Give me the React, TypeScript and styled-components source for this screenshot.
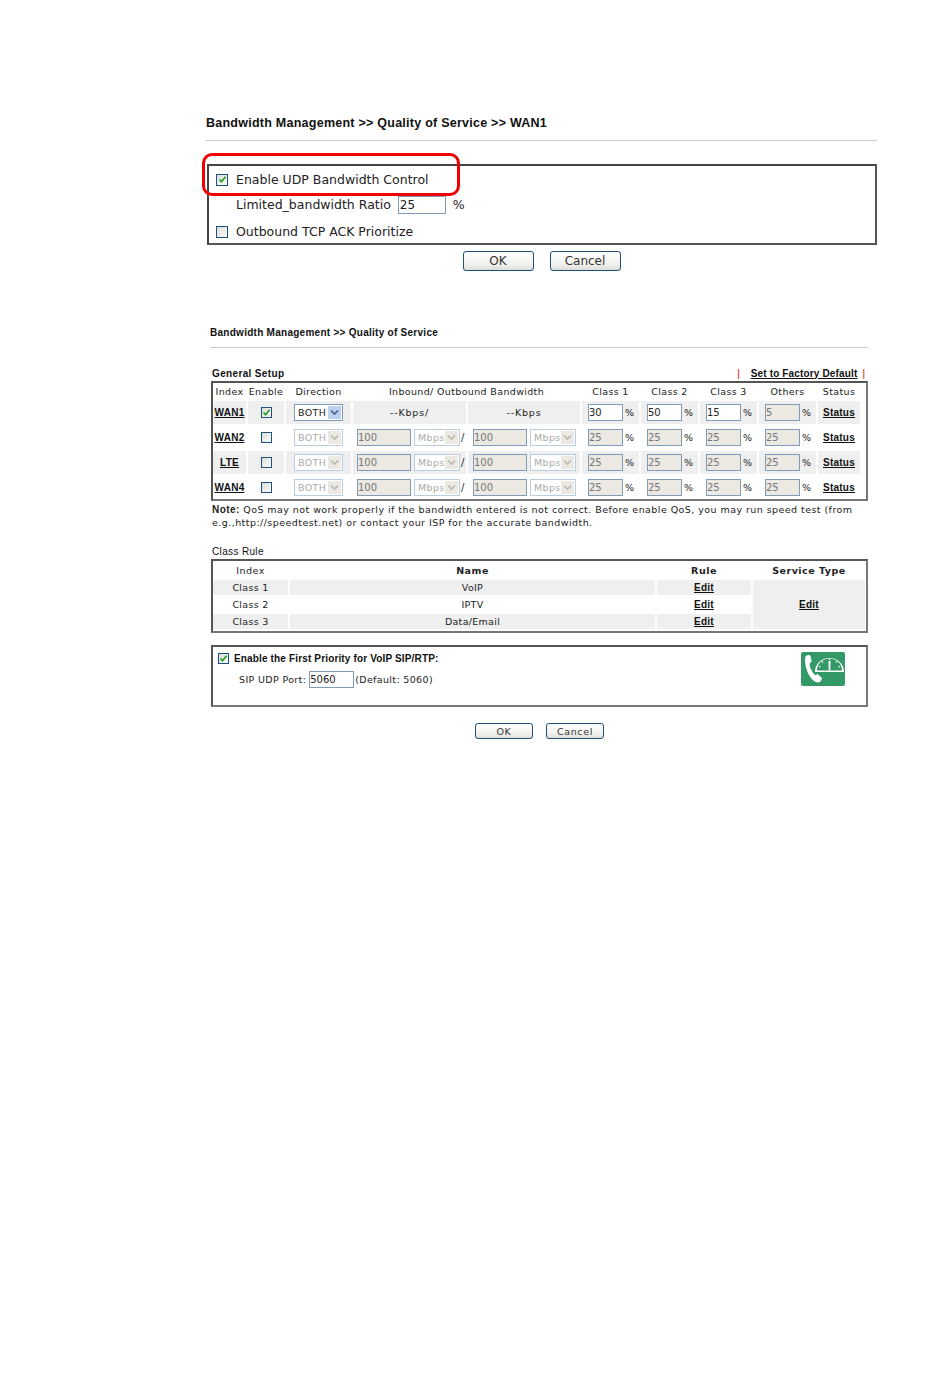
import React from "react";
import styled, { createGlobalStyle } from "styled-components";

const GlobalStyle = createGlobalStyle`
  html, body { margin: 0; padding: 0; background: #fff; }
  body { font-family: "DejaVu Sans", Verdana, sans-serif; color: #111; }
`;

const Page = styled.div`
  width: 950px;
  height: 1388px;
  padding-top: 114px;
  box-sizing: border-box;
  overflow: hidden;
`;

const Upper = styled.section`
  position: relative;
  width: 671px;
  margin-left: 206px;
`;

const Lower = styled.section`
  width: 658px;
  margin: 55px 0 0 210px;
`;

const PageTitle = styled.h1<{ $small?: boolean }>`
  margin: 0;
  font: bold ${(p) => (p.$small ? "10px/14px" : "12.5px/18px")} "Liberation Sans", Arial, sans-serif;
  letter-spacing: ${(p) => (p.$small ? "0.27px" : "0.25px")};
  padding-bottom: ${(p) => (p.$small ? "7px" : "8px")};
  border-bottom: 1px solid #ccc;
`;

const Frame = styled.div`
  box-sizing: border-box;
  border: 2px solid #555;
  border-right-color: #777;
  border-bottom-color: #777;
`;

const UdpFrame = styled(Frame)`
  height: 81px;
  margin-top: 23px;
  margin-left: 1px;
  padding: 1px 0 0 7px;
  display: flex;
  flex-direction: column;
  border-color: #444;
  border-right-color: #555;
  border-bottom-color: #555;
  font-size: 12.5px;
  color: #222;
`;

const UdpRow = styled.div<{ $indent?: boolean; $drop?: number }>`
  flex: none;
  height: ${(p) => (p.$drop ? "23px" : "25px")};
  margin-top: ${(p) => p.$drop ?? 0}px;
  display: flex;
  align-items: center;
  gap: ${(p) => (p.$indent ? "7px" : "8px")};
  padding-left: ${(p) => (p.$indent ? "20px" : "0")};
`;

const Highlight = styled.div`
  position: absolute;
  left: -4px;
  top: 39px;
  width: 258px;
  height: 43px;
  box-sizing: border-box;
  border: 3px solid #f00000;
  border-radius: 10px;
  pointer-events: none;
`;

const RatioInput = styled.input`
  box-sizing: border-box;
  width: 48px;
  height: 18px;
  padding: 0 1px;
  border: 1px solid #7f9db9;
  font: 12px "DejaVu Sans", sans-serif;
  color: #222;
  outline: none;
`;

const ButtonRow = styled.div<{ $small?: boolean }>`
  display: flex;
  gap: ${(p) => (p.$small ? "13px" : "16px")};
  justify-content: center;
  margin-top: ${(p) => (p.$small ? "16px" : "6px")};
  padding-left: ${(p) => (p.$small ? "1px" : "0")};
`;

const Btn = styled.button<{ $small?: boolean }>`
  box-sizing: border-box;
  width: ${(p) => (p.$small ? "58px" : "71px")};
  height: ${(p) => (p.$small ? "16px" : "20px")};
  padding: 0;
  border: 1px solid #1e5078;
  border-radius: 3px;
  background: linear-gradient(#ffffff, #f0f0ec 70%, #dcdcd8);
  font: ${(p) => (p.$small ? "9.5px" : "12px")} "DejaVu Sans", sans-serif;
  letter-spacing: ${(p) => (p.$small ? "0.6px" : "0")};
  color: #333;
`;

const Box = styled.span<{ $small?: boolean }>`
  box-sizing: border-box;
  flex: none;
  display: inline-flex;
  align-items: center;
  justify-content: center;
  width: ${(p) => (p.$small ? "11px" : "12px")};
  height: ${(p) => (p.$small ? "11px" : "12px")};
  border: 1px solid #1c5180;
  background: linear-gradient(135deg, #dcdcd7, #fbfbf9);
`;

const Check = ({ on, small }: { on?: boolean; small?: boolean }) => (
  <Box $small={small}>
    {on && (
      <svg width="9" height="9" viewBox="0 0 9 9">
        <path d="M1.5 4.5 L3.5 6.8 L7.6 1.8" fill="none" stroke="#21a121" strokeWidth="1.7" />
      </svg>
    )}
  </Box>
);

const BarRow = styled.div`
  display: flex;
  justify-content: space-between;
  align-items: center;
  height: 15px;
  margin-top: 18px;
  padding: 0 2px;
`;

const SubTitle = styled.span<{ $light?: boolean }>`
  font: ${(p) => (p.$light ? "normal" : "bold")} 10px/14px "Liberation Sans", Arial, sans-serif;
  letter-spacing: 0.35px;
`;

const FactoryLinks = styled.span`
  display: flex;
  gap: 11px;
  margin-right: 1px;
  color: #e00000;
  font: 10px/14px "Liberation Sans", Arial, sans-serif;
  align-items: center;
`;

const BoldLink = styled.a`
  font: bold 10px/14px "Liberation Sans", Arial, sans-serif;
  letter-spacing: 0.25px;
  color: #111;
  text-decoration: underline;
`;

const FactoryLink = styled(BoldLink)`
  margin-right: -6px;
  letter-spacing: 0.15px;
`;

const SetupGrid = styled(Frame)`
  height: 120px;
  margin: 0 0 0 1px;
  display: grid;
  grid-template-columns: 33px 36px 65px 113px 112px 57px 57px 57px 57px 42px;
  grid-template-rows: 16px repeat(4, 23px);
  gap: 2px;
  align-content: start;
`;

const Head = styled.div<{ $span?: number }>`
  grid-column: span ${(p) => p.$span ?? 1};
  display: flex;
  align-items: center;
  justify-content: center;
  font-size: 9.5px;
  letter-spacing: 0.35px;
  color: #222;
  white-space: nowrap;
`;

const Cell = styled.div<{ $shade?: boolean; $pad?: number }>`
  display: flex;
  align-items: center;
  justify-content: ${(p) => (p.$pad ? "flex-start" : "center")};
  padding-left: ${(p) => p.$pad ?? 0}px;
  background: ${(p) => (p.$shade ? "#efefef" : "transparent")};
  font-size: 9.5px;
  letter-spacing: 0.3px;
  color: #222;
  white-space: nowrap;
  min-width: 0;
`;

const KbpsCell = styled(Cell)`
  letter-spacing: 0.8px;
`;

const PercentCell = styled(Cell)`
  justify-content: flex-start;
  padding-left: 6px;
  gap: 2px;
`;

const Field = styled.input<{ $w: number }>`
  box-sizing: border-box;
  flex: none;
  width: ${(p) => p.$w}px;
  height: 17px;
  padding: 0;
  border: 1px solid #7f9db9;
  background: #fff;
  font: 10px "DejaVu Sans", sans-serif;
  color: #222;
  outline: none;
  &:disabled {
    background: #ebe9e2;
    color: #777;
    opacity: 1;
  }
`;

const SelectBox = styled.span<{ $w: number; $off?: boolean }>`
  box-sizing: border-box;
  flex: none;
  display: flex;
  align-items: center;
  justify-content: space-between;
  width: ${(p) => p.$w}px;
  height: 17px;
  padding: 1px 1px 1px 3px;
  border: 1px solid ${(p) => (p.$off ? "#b9cde0" : "#7f9db9")};
  background: #fff;
  font-size: 9.5px;
  letter-spacing: 0.35px;
  color: ${(p) => (p.$off ? "#aaa" : "#222")};
`;

const Arrow = styled.span<{ $off?: boolean }>`
  width: 13px;
  height: 13px;
  display: flex;
  align-items: center;
  justify-content: center;
  background: ${(p) => (p.$off ? "#ebe9e2" : "#bcd0f2")};
`;

const Select = ({ label, w, off }: { label: string; w: number; off?: boolean }) => (
  <SelectBox $w={w} $off={off}>
    {label}
    <Arrow $off={off}>
      <svg width="9" height="7" viewBox="0 0 9 7">
        <path d="M1 1.5 L4.5 5 L8 1.5" fill="none" stroke={off ? "#b8b8b0" : "#4d6185"} strokeWidth="1.6" />
      </svg>
    </Arrow>
  </SelectBox>
);

const SelectGap = styled.span`
  flex: none;
  width: 3px;
`;

const Slash = styled.span`
  margin-left: 1px;
  font-size: 10px;
`;

const Note = styled.p`
  margin: 2px 0 0 2px;
  font-size: 9.5px;
  line-height: 13px;
  letter-spacing: 0.44px;
  color: #222;
  white-space: nowrap;
`;

const NoteLabel = styled.b`
  font: bold 10px "Liberation Sans", Arial, sans-serif;
`;

const RuleTitleRow = styled(BarRow)`
  margin-top: 16px;
  height: 14px;
`;

const RuleGrid = styled(Frame)`
  height: 74px;
  margin-left: 1px;
  display: grid;
  grid-template-columns: 75px 365px 94px 112px;
  grid-template-rows: 17px repeat(3, 15px);
  gap: 2px;
  align-content: start;
`;

const RuleHead = styled(Head)<{ $bold?: boolean }>`
  padding-top: 1px;
  font-weight: ${(p) => (p.$bold ? "bold" : "normal")};
  letter-spacing: 0.5px;
`;

const ServiceCell = styled(Cell)`
  grid-column: 4;
  grid-row: 2 / span 3;
  background: #efefef;
`;

const PriorityFrame = styled(Frame)`
  position: relative;
  height: 62px;
  margin: 12px 0 0 1px;
  padding: 5px 0 0 5px;
`;

const PriorityRow = styled.div`
  display: flex;
  align-items: center;
  gap: 5px;
  height: 13px;
  font: bold 10px/13px "Liberation Sans", Arial, sans-serif;
  letter-spacing: 0.15px;
`;

const PortRow = styled.div`
  display: flex;
  align-items: center;
  gap: 1px;
  margin: 6px 0 0 21px;
  font-size: 9.5px;
  letter-spacing: 0.35px;
  color: #222;
`;

const PortInput = styled(Field)`
  margin-left: 2px;
`;

const VoipIcon = styled.svg`
  position: absolute;
  left: 588px;
  top: 5px;
`;

const rows = [
  { name: "WAN2", shade: false },
  { name: "LTE", shade: true },
  { name: "WAN4", shade: false },
];

const classRows = [
  { index: "Class 1", name: "VoIP", shade: true },
  { index: "Class 2", name: "IPTV", shade: false },
  { index: "Class 3", name: "Data/Email", shade: true },
];

const App = () => {
  return (
    <Page>
      <GlobalStyle />
      <Upper>
        <PageTitle>Bandwidth Management &gt;&gt; Quality of Service &gt;&gt; WAN1</PageTitle>
        <UdpFrame>
          <UdpRow>
            <Check on />
            Enable UDP Bandwidth Control
          </UdpRow>
          <UdpRow $indent>
            Limited_bandwidth Ratio
            <RatioInput defaultValue="25" readOnly />%
          </UdpRow>
          <UdpRow $drop={3}>
            <Check />
            Outbound TCP ACK Prioritize
          </UdpRow>
        </UdpFrame>
        <Highlight />
        <ButtonRow>
          <Btn>OK</Btn>
          <Btn>Cancel</Btn>
        </ButtonRow>
      </Upper>

      <Lower>
        <PageTitle $small>Bandwidth Management &gt;&gt; Quality of Service</PageTitle>
        <BarRow>
          <SubTitle>General Setup</SubTitle>
          <FactoryLinks>
            |<FactoryLink href="#">Set to Factory Default</FactoryLink>|
          </FactoryLinks>
        </BarRow>
        <SetupGrid>
          <Head>Index</Head>
          <Head>Enable</Head>
          <Head>Direction</Head>
          <Head $span={2}>Inbound/ Outbound Bandwidth</Head>
          <Head>Class 1</Head>
          <Head>Class 2</Head>
          <Head>Class 3</Head>
          <Head>Others</Head>
          <Head>Status</Head>

          <Cell $shade><BoldLink href="#">WAN1</BoldLink></Cell>
          <Cell $shade><Check on small /></Cell>
          <Cell $shade><Select label="BOTH" w={49} /></Cell>
          <KbpsCell $shade>--Kbps/</KbpsCell>
          <KbpsCell $shade>--Kbps</KbpsCell>
          <PercentCell $shade><Field $w={35} defaultValue="30" readOnly />%</PercentCell>
          <PercentCell $shade><Field $w={35} defaultValue="50" readOnly />%</PercentCell>
          <PercentCell $shade><Field $w={35} defaultValue="15" readOnly />%</PercentCell>
          <PercentCell $shade><Field $w={35} defaultValue="5" disabled />%</PercentCell>
          <Cell $shade><BoldLink href="#">Status</BoldLink></Cell>

          {rows.map((row) => (
            <React.Fragment key={row.name}>
              <Cell $shade={row.shade}><BoldLink href="#">{row.name}</BoldLink></Cell>
              <Cell $shade={row.shade}><Check small /></Cell>
              <Cell $shade={row.shade}><Select label="BOTH" w={49} off /></Cell>
              <Cell $shade={row.shade} $pad={4}>
                <Field $w={54} defaultValue="100" disabled />
                <SelectGap />
                <Select label="Mbps" w={46} off />
                <Slash>/</Slash>
              </Cell>
              <Cell $shade={row.shade} $pad={5}>
                <Field $w={54} defaultValue="100" disabled />
                <SelectGap />
                <Select label="Mbps" w={46} off />
              </Cell>
              {[0, 1, 2, 3].map((n) => (
                <PercentCell key={n} $shade={row.shade}>
                  <Field $w={35} defaultValue="25" disabled />%
                </PercentCell>
              ))}
              <Cell $shade={row.shade}><BoldLink href="#">Status</BoldLink></Cell>
            </React.Fragment>
          ))}
        </SetupGrid>
        <Note>
          <NoteLabel>Note:</NoteLabel> QoS may not work properly if the bandwidth entered is not correct. Before enable QoS, you may run speed test (from
          <br />
          e.g.,http://speedtest.net) or contact your ISP for the accurate bandwidth.
        </Note>
        <RuleTitleRow>
          <SubTitle $light>Class Rule</SubTitle>
        </RuleTitleRow>
        <RuleGrid>
          <RuleHead>Index</RuleHead>
          <RuleHead $bold>Name</RuleHead>
          <RuleHead $bold>Rule</RuleHead>
          <RuleHead $bold>Service Type</RuleHead>
          {classRows.map((row) => (
            <React.Fragment key={row.index}>
              <Cell $shade={row.shade}>{row.index}</Cell>
              <Cell $shade={row.shade}>{row.name}</Cell>
              <Cell $shade={row.shade}><BoldLink href="#">Edit</BoldLink></Cell>
            </React.Fragment>
          ))}
          <ServiceCell><BoldLink href="#">Edit</BoldLink></ServiceCell>
        </RuleGrid>
        <PriorityFrame>
          <PriorityRow>
            <Check on small />
            Enable the First Priority for VoIP SIP/RTP:
          </PriorityRow>
          <PortRow>
            SIP UDP Port:
            <PortInput $w={45} defaultValue="5060" readOnly />
            (Default: 5060)
          </PortRow>
          <VoipIcon width="44" height="34" viewBox="0 0 44 34">
            <rect width="44" height="34" rx="2" fill="#339966" />
            <path
              d="M5.5 3.5 C7.5 2.5 9.5 3 9.8 4.5 L10.5 9 C10.6 10.2 9 11 8.6 11.8 C8.4 15 11.5 21 14 23 C15 23.2 16 22 17 22.4 L20.5 25.5 C21.3 26.5 20.5 28.5 19 29.8 C17.5 31 15 30.5 13 29 C8 25 4 16 4 8 C4 6 4.4 4.2 5.5 3.5 Z"
              fill="#fff"
            />
            <path d="M14 20 A14.5 14 0 0 1 43 20 Z" fill="#fff" />
            <path d="M16 18.6 A12.5 12 0 0 1 41 18.6 Z" fill="#339966" />
            <path d="M27.5 9 L29.5 9 L29.3 18.6 L27.7 18.6 Z" fill="#fff" />
            <path d="M28 6.5h1.2v1.8H28z M21.5 9l1 1.4-.9.6-1-1.4z M35.5 9l-1 1.4.9.6 1-1.4z M18.2 14l1.7.6-.3.9-1.7-.6z M38.8 14l-1.7.6.3.9 1.7-.6z" fill="#fff" />
          </VoipIcon>
        </PriorityFrame>
        <ButtonRow $small>
          <Btn $small>OK</Btn>
          <Btn $small>Cancel</Btn>
        </ButtonRow>
      </Lower>
    </Page>
  );
};

export default App;
